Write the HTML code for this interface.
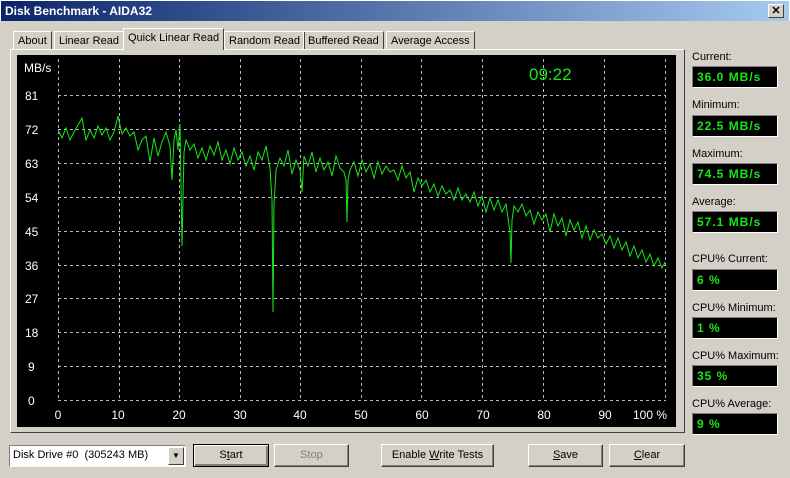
<!DOCTYPE html>
<html><head><style>
*{margin:0;padding:0;box-sizing:border-box}
body{width:790px;height:478px;background:#d4d0c8;font-family:Tahoma,"Liberation Sans",sans-serif;font-size:11px;position:relative;overflow:hidden;color:#000}
.title{position:absolute;left:0;top:0;width:790px;height:21px;background:linear-gradient(90deg,#0a246a,#a6caf0);border:1px solid #fff;border-bottom:none}
.title span{position:absolute;left:4px;top:3px;color:#fff;font-weight:bold;font-size:12px}
.close{position:absolute;right:5px;top:3px;width:16px;height:14px;background:#d4d0c8;border:1px solid;border-color:#fff #404040 #404040 #fff;font-size:11px;font-weight:bold;text-align:center;line-height:12px}
.tab{position:absolute;top:31px;height:19px;border:1px solid;border-color:#fff #404040 transparent #fff;padding:3px 4px 0;white-space:nowrap}
.tab.sel{top:28px;height:22px;background:#d4d0c8;z-index:2;border-bottom:none}
.panel{position:absolute;left:10px;top:49px;width:675px;height:384px;border:1px solid;border-color:#fff #404040 #404040 #fff}
.chart{position:absolute;left:17px;top:55px;width:659px;height:372px;background:#000}
.lbl{position:absolute;left:692px}
.box{position:absolute;left:692px;width:86px;height:22px;background:#000;border:1px solid;border-color:#808080 #fff #fff #808080;color:#19e619;font-family:"Liberation Sans",sans-serif;font-weight:bold;font-size:12px;letter-spacing:1px;padding:3px 0 0 4px}
.btn{position:absolute;top:444px;height:23px;border:1px solid;border-color:#fff #404040 #404040 #fff;box-shadow:inset -1px -1px #808080;text-align:center;line-height:21px}
</style></head><body>
<div class="title"><span>Disk Benchmark - AIDA32</span><div class="close">✕</div></div>
<div class="tab" style="left:13px">About</div>
<div class="tab" style="left:54px">Linear Read</div>
<div class="tab sel" style="left:123px">Quick Linear Read</div>
<div class="tab" style="left:224px">Random Read</div>
<div class="tab" style="left:303px">Buffered Read</div>
<div class="tab" style="left:386px">Average Access</div>
<div class="panel"></div>
<svg class="chart" width="659" height="372" viewBox="17 55 659 372">
<rect x="17" y="55" width="659" height="372" fill="#000"/>
<g stroke="#bbb" stroke-dasharray="3,3" stroke-width="1" fill="none">
<path d="M58.5 59V400M119.5 59V400M179.5 59V400M240.5 59V400M300.5 59V400M361.5 59V400M421.5 59V400M482.5 59V400M543.5 59V400M604.5 59V400M665.5 59V400"/>
<path d="M58 95.5H666M58 129.5H666M58 163.5H666M58 197.5H666M58 231.5H666M58 265.5H666M58 298.5H666M58 332.5H666M58 366.5H666M58 400.5H666"/>
</g>
<g fill="#fff" font-family="Liberation Sans,sans-serif" font-size="12">
<text x="24" y="72">MB/s</text>
<text x="25" y="100">81</text><text x="25" y="134">72</text><text x="25" y="168">63</text><text x="25" y="202">54</text><text x="25" y="236">45</text><text x="25" y="270">36</text><text x="25" y="303">27</text><text x="25" y="337">18</text><text x="28" y="371">9</text><text x="28" y="405">0</text>
<g text-anchor="middle"><text x="58" y="419">0</text><text x="118" y="419">10</text><text x="179" y="419">20</text><text x="240" y="419">30</text><text x="300" y="419">40</text><text x="361" y="419">50</text><text x="422" y="419">60</text><text x="483" y="419">70</text><text x="544" y="419">80</text><text x="605" y="419">90</text><text x="650" y="419">100 %</text></g>
</g>
<text x="529" y="80" fill="#19e619" font-family="Liberation Sans,sans-serif" font-size="17">09:22</text>
<polyline fill="none" stroke="#19e619" stroke-width="1" points="58,130 62,138 66,128 70,140 74,132 78,125 82,118 86,140 90,130 94,138 98,126 102,135 106,128 110,140 114,132 118,116 122,134 126,128 130,136 134,132 138,150 142,140 146,136 150,162 154,138 158,156 162,142 166,132 170,146 172,180 174,140 176,130 178,150 180,124 182,246 184,152 186,140 190,150 194,144 198,158 202,148 206,160 210,146 214,155 218,142 222,160 226,150 230,164 234,148 238,160 242,152 246,166 250,156 254,170 258,152 262,160 266,146 270,168 272,200 273,312 274,205 276,170 280,158 284,166 288,150 292,174 296,160 300,170 302,192 304,156 308,166 312,152 316,172 320,158 324,170 328,162 332,176 336,156 340,168 344,172 346,180 347,222 348,180 350,170 354,162 358,176 362,160 366,172 370,164 374,178 378,162 382,174 386,166 390,172 394,170 398,180 402,166 406,178 410,172 414,192 418,178 422,186 426,180 430,192 434,184 438,196 442,186 446,194 450,190 454,200 458,188 462,200 466,194 470,202 474,192 478,206 482,196 486,212 490,198 494,210 498,200 502,212 506,204 508,218 510,232 511,263 512,220 514,206 518,212 522,204 526,216 530,210 534,224 538,212 542,220 546,214 550,232 554,214 558,226 562,218 566,236 570,220 574,230 578,222 582,238 586,226 590,240 594,230 598,238 602,234 606,244 610,236 614,248 618,238 622,250 626,242 630,256 634,246 638,258 642,250 646,262 650,254 654,266 658,258 662,268 665,262"/>
</svg>
<div class="lbl" style="top:51px">Current:</div><div class="box" style="top:66px">36.0 MB/s</div>
<div class="lbl" style="top:99px">Minimum:</div><div class="box" style="top:115px">22.5 MB/s</div>
<div class="lbl" style="top:148px">Maximum:</div><div class="box" style="top:163px">74.5 MB/s</div>
<div class="lbl" style="top:196px">Average:</div><div class="box" style="top:211px">57.1 MB/s</div>
<div class="lbl" style="top:253px">CPU% Current:</div><div class="box" style="top:269px">6 %</div>
<div class="lbl" style="top:302px">CPU% Minimum:</div><div class="box" style="top:317px">1 %</div>
<div class="lbl" style="top:350px">CPU% Maximum:</div><div class="box" style="top:365px">35 %</div>
<div class="lbl" style="top:398px">CPU% Average:</div><div class="box" style="top:413px">9 %</div>
<div style="position:absolute;left:9px;top:445px;width:177px;height:22px;background:#fff;border:1px solid;border-color:#808080 #fff #fff #808080;padding:3px 0 0 3px">Disk Drive #0&nbsp; (305243 MB)
<div style="position:absolute;right:1px;top:1px;width:16px;height:18px;background:#d4d0c8;border:1px solid;border-color:#fff #404040 #404040 #fff;font-size:8px;text-align:center;line-height:16px">▼</div></div>
<div class="btn" style="left:193px;width:76px;border:1px solid #000;box-shadow:inset 1px 1px #fff,inset -2px -2px #808080">S<u>t</u>art</div>
<div class="btn" style="left:274px;width:75px;color:#808080">Stop</div>
<div class="btn" style="left:381px;width:113px">Enable <u>W</u>rite Tests</div>
<div class="btn" style="left:528px;width:75px"><u>S</u>ave</div>
<div class="btn" style="left:609px;width:76px"><u>C</u>lear</div>
</body></html>
